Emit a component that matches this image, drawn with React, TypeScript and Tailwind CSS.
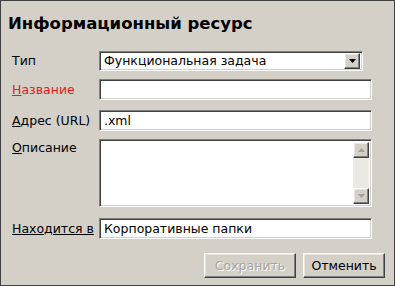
import React from "react";

const sunken =
  "border border-t-[#808080] border-l-[#808080] border-r-white border-b-white shadow-[inset_1px_1px_0_#404040,inset_-1px_-1px_0_#d4d0c8] bg-white";

const raised =
  "border border-t-white border-l-white border-r-[#404040] border-b-[#404040] shadow-[inset_-1px_-1px_0_#808080,inset_1px_1px_0_#e8e6e0] bg-[#d4d0c8]";

const text = "text-[12.5px] leading-[16px] font-['DejaVu_Sans',Verdana,sans-serif]";

function Label({ children, red }: { children: React.ReactNode; red?: boolean }) {
  return (
    <div className={`w-[98px] shrink-0 pl-[11px] whitespace-nowrap ${text} ${red ? "text-[#e02020]" : "text-black"}`}>
      {children}
    </div>
  );
}

function Arrow({ up, color = "#000" }: { up?: boolean; color?: string }) {
  return (
    <svg width="7" height="4" viewBox="0 0 7 4">
      <path d={up ? "M0 4 L3.5 0 L7 4 Z" : "M0 0 L7 0 L3.5 4 Z"} fill={color} />
    </svg>
  );
}

export default function App() {
  return (
    <div className="w-[395px] h-[286px] bg-[#d4d0c8] border border-[#404040] flex flex-col">
      {/* Заголовок */}
      <div className="pl-[7px] pt-[13px] h-[50px] text-[16.5px] font-bold text-black leading-[20px] font-['DejaVu_Sans',Verdana,sans-serif]">
        Информационный ресурс
      </div>

      {/* Тип */}
      <div className="flex items-center h-[20px]">
        <Label>Тип</Label>
        <div className={`${sunken} w-[264px] h-[20px] flex items-center justify-between pl-[4px] pr-[2px]`}>
          <span className={text}>Функциональная задача</span>
          <div className={`${raised} w-[16px] h-[16px] flex items-center justify-center`}>
            <Arrow />
          </div>
        </div>
      </div>

      {/* Название */}
      <div className="flex items-center h-[21px] mt-[8px]">
        <Label red>
          <span className="underline">Н</span>азвание
        </Label>
        <div className={`${sunken} w-[273px] h-[21px]`} />
      </div>

      {/* Адрес */}
      <div className="flex items-center h-[21px] mt-[10px]">
        <Label>
          <span className="underline">А</span>дрес (URL)
        </Label>
        <div className={`${sunken} w-[273px] h-[21px] flex items-center pl-[4px] ${text}`}>
          .xml
        </div>
      </div>

      {/* Описание */}
      <div className="flex items-start h-[68px] mt-[8px]">
        <Label>
          <div className="pt-[1px]">
            <span className="underline">О</span>писание
          </div>
        </Label>
        <div className={`${sunken} w-[273px] h-[68px] flex justify-end p-[2px]`}>
          <div className="w-[16px] h-full bg-[#ebe9e4] flex flex-col justify-between">
            <div className={`${raised} w-[16px] h-[16px] flex items-center justify-center`}>
              <Arrow up color="#a0a0a0" />
            </div>
            <div className={`${raised} w-[16px] h-[16px] flex items-center justify-center`}>
              <Arrow color="#a0a0a0" />
            </div>
          </div>
        </div>
      </div>

      {/* Находится в */}
      <div className="flex items-center h-[21px] mt-[11px]">
        <Label>
          <span className="underline">Находится в</span>
        </Label>
        <div className={`${sunken} w-[273px] h-[21px] flex items-center pl-[4px] ${text}`}>
          Корпоративные папки
        </div>
      </div>

      {/* Кнопки */}
      <div className="flex justify-end gap-[7px] pr-[9px] mt-[14px]">
        <div className={`${raised} w-[92px] h-[25px] flex items-center justify-center ${text} text-[#a8a59e] [text-shadow:1px_1px_0_#fff]`}>
          Сохранить
        </div>
        <div className={`${raised} w-[82px] h-[25px] flex items-center justify-center ${text} text-black`}>
          Отменить
        </div>
      </div>
    </div>
  );
}
